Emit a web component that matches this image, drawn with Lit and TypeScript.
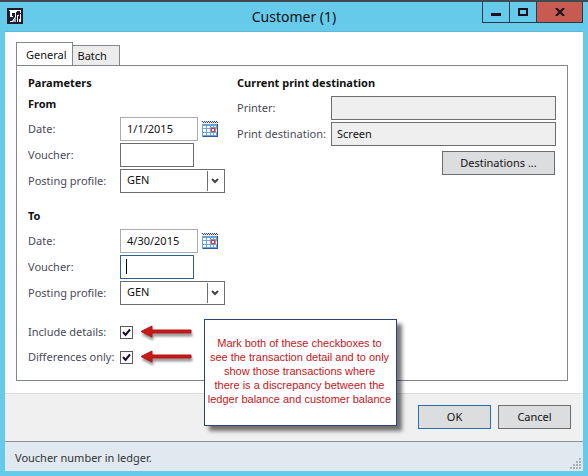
import { LitElement, html, css, svg } from "lit";
import { customElement } from "lit/decorators.js";

const calendar = html`<svg width="16" height="16" viewBox="0 0 16 16" aria-hidden="true">
  <path d="M0 2h16v14H0z" fill="#6fa3d4" />
  <path d="M15 3h1v13H1v-1h14z" fill="#2f5b92" />
  <path d="M0 0h16v3H0z" fill="#e8ecf2" />
  <path d="M0 0.500h16M1 1.500h15" stroke="#39414e" stroke-dasharray="1 1" />
  <path
    d="M1 5h3v2H1zM5 5h3v2H5zM9 5h2v1H9zM12 5h2v1h-2zM1 8h3v3H1zM5 8h3v3H5zM14 8h1v3h-1zM1 12h3v2H1zM5 12h3v2H5zM9 12h2v2H9zM12 12h2v2h-2z"
    fill="#fff"
  />
  <path d="M9.500 7.500h3v3h-3z" fill="#fff" stroke="#e0262c" />
</svg>`;

const arrow = html`<svg class="arrow" width="56" height="18" viewBox="0 0 56 18" aria-hidden="true">
  <path d="M2 8.500L13 3v4h39v3H13v4z" fill="#c81818" stroke="#b01414" stroke-linejoin="round" />
</svg>`;

const gripDots = [[9, 0], [6, 3], [9, 3], [3, 6], [6, 6], [9, 6], [0, 9], [3, 9], [6, 9], [9, 9]];

@customElement("app-root")
export class AppRoot extends LitElement {
  static styles = css`
    :host {
      display: block;
      font: 11px/16px "Noto Sans", "Open Sans", sans-serif;
      color: #111;
    }
    * {
      box-sizing: border-box;
    }
    .window {
      display: flex;
      flex-direction: column;
      min-height: 100vh;
      padding: 0 5px 5px;
      border-top: 2px solid #3d4a50;
      background: #66caea;
    }
    .titlebar {
      display: grid;
      grid-template-columns: 104px 1fr 104px;
      align-items: start;
      height: 30px;
      border-bottom: 1px solid #62b6d8;
    }
    .app-icon {
      margin: 6px 0 0 2px;
    }
    h1 {
      margin: 5px 0 0;
      font-size: 14px;
      line-height: 20px;
      font-weight: 400;
      text-align: center;
    }
    .controls {
      display: flex;
      justify-content: flex-end;
      height: 21px;
    }
    .controls button {
      display: grid;
      place-items: center;
      width: 28px;
      margin-left: -1px;
      padding: 0;
      border: 1px solid #2b3a48;
      border-top: 0;
      background: none;
    }
    .controls .close {
      width: 47px;
      background: #c75b50;
    }
    .body {
      flex: 1;
      padding: 10px 15px 12px 11px;
      background: #fff;
    }
    .tabs {
      position: relative;
      display: flex;
      align-items: flex-end;
      margin-bottom: -1px;
    }
    .tabs button {
      height: 21px;
      padding: 0 12px 0 5px;
      border: 1px solid #82868f;
      border-left: 0;
      background: #ececec;
      font: inherit;
      color: inherit;
    }
    .tabs .selected {
      height: 24px;
      padding: 0 5px 0 9px;
      border-left: 1px solid #82868f;
      border-bottom: 0;
      background: #fff;
    }
    .panel {
      position: relative;
      display: grid;
      grid-template-columns: 209px 1fr;
      padding: 8px 11px 11px;
      border: 1px solid #82868f;
    }
    h2,
    h3 {
      margin: 0;
      font-size: 11px;
      line-height: 18px;
      font-weight: 700;
    }
    h3 {
      margin: 3px 0 4px;
    }
    .second {
      margin-top: 14px;
    }
    .rows {
      display: grid;
      grid-template-columns: 92px 1fr;
      row-gap: 2px;
      align-items: center;
      color: #4a4a58;
    }
    .print {
      grid-template-columns: 94px 1fr;
      margin-top: 4px;
    }
    .cell {
      position: relative;
      display: flex;
      align-items: center;
      gap: 4px;
      height: 24px;
    }
    label {
      white-space: nowrap;
    }
    input[type="text"],
    select {
      width: 74px;
      height: 24px;
      padding: 0 6px 2px;
      border: 1px solid #6d6d6d;
      border-radius: 0;
      outline: 0;
      background: #fff;
      font: inherit;
      color: #111;
    }
    input.date {
      width: 78px;
      border-color: #ababab;
    }
    input.active {
      border-color: #2a5f9e;
    }
    .print input[type="text"] {
      width: 100%;
      padding: 0 5px 2px;
      background: #efefef;
    }
    select {
      width: 105px;
      appearance: none;
    }
    .icon-button {
      display: block;
      width: 16px;
      height: 16px;
      padding: 0;
      border: 0;
      background: none;
    }
    .chevron {
      position: absolute;
      left: 87px;
      top: 2px;
      pointer-events: none;
    }
    .caret {
      position: absolute;
      left: 6px;
      top: 4px;
      width: 1px;
      height: 15px;
      background: #000;
    }
    .checks {
      row-gap: 1px;
      margin-top: 15px;
    }
    .checks .cell {
      gap: 6px;
    }
    input[type="checkbox"] {
      appearance: none;
      flex: none;
      width: 13px;
      height: 13px;
      margin: 0;
      border: 1px solid #5a5a5a;
      background: #fff;
    }
    .tick {
      position: absolute;
      left: 0;
      pointer-events: none;
    }
    .arrow {
      flex: none;
      filter: drop-shadow(1px 3px 1px #0006);
    }
    .push {
      width: 73px;
      height: 24px;
      padding: 0 0 1px;
      border: 1px solid #6d6d6d;
      background: #dcdddf;
      font: inherit;
      color: #111;
    }
    .wide {
      display: block;
      width: 113px;
      margin: 5px 1px 0 auto;
    }
    .default {
      border-color: #2a70b8;
    }
    .callout {
      position: absolute;
      left: 187px;
      top: 253px;
      width: 193px;
      margin: 0;
      padding: 16px 2px 19px 0;
      border: 1px solid #2b4578;
      background: #fff;
      box-shadow: 5px 5px 4px #0008;
      font: 11px/14px "Liberation Sans", Arial, sans-serif;
      color: #c81420;
      text-align: center;
      white-space: pre-line;
    }
    .footer {
      display: flex;
      justify-content: flex-end;
      gap: 7px;
      padding: 11px 12px 12px;
      border-top: 1px solid #dcdcdc;
      background: #f0f0f0;
    }
    .status {
      display: flex;
      justify-content: space-between;
      align-items: flex-end;
      padding: 8px 2px 2px 10px;
      border-top: 1px solid #8c9298;
      background: #e1e9f0;
      color: #333;
    }
    .status output {
      padding-bottom: 3px;
    }
  `;

  private period(id: string, date: string, active: boolean) {
    return html`<div class="rows">
      <label for="${id}-date">Date:</label>
      <div class="cell">
        <input id="${id}-date" class="date" type="text" .value=${date} />
        <button class="icon-button" aria-label="Choose date">${calendar}</button>
      </div>
      <label for="${id}-voucher">Voucher:</label>
      <div class="cell">
        <input id="${id}-voucher" class=${active ? "active" : ""} type="text" />
        ${active ? html`<span class="caret"></span>` : ""}
      </div>
      <label for="${id}-profile">Posting profile:</label>
      <div class="cell">
        <select id="${id}-profile"><option>GEN</option></select>
        <svg class="chevron" width="16" height="20" aria-hidden="true">
          <path d="M0.500 0v20" stroke="#6d6d6d" />
          <path d="M5 8l3 3 3-3" fill="none" stroke="#444" stroke-width="2" />
        </svg>
      </div>
    </div>`;
  }

  private check(id: string, label: string) {
    return html`<label for=${id}>${label}</label>
      <div class="cell">
        <input id=${id} type="checkbox" checked />
        <svg class="tick" width="13" height="13" aria-hidden="true">
          <path d="M3 6l2.500 3L10 3.500" fill="none" stroke="#1a1020" stroke-width="2" />
        </svg>
        ${arrow}
      </div>`;
  }

  render() {
    return html`<div class="window">
      <header class="titlebar">
        <svg class="app-icon" width="16" height="16" viewBox="0 0 16 16" aria-hidden="true">
          <rect width="16" height="16" fill="#241a30" />
          <path d="M2 2h12v3h-1V3H3v6h3V8H5V5h3v4l-3 4H3v1h3l3-5V4h1v10h1V8h1v6h2V6h-1v5h-1V7h-2V3H2z" fill="#fff" />
          <path d="M7 12l2-3v5H6z" fill="#8fb4d8" />
        </svg>
        <h1>Customer (1)</h1>
        <div class="controls">
          <button aria-label="Minimize">
            <svg width="10" height="9"><path d="M0 6.500h10" stroke="#1a1020" stroke-width="3" /></svg>
          </button>
          <button aria-label="Maximize">
            <svg width="10" height="8"><rect x="1" y="1" width="8" height="6" fill="none" stroke="#1a1020" stroke-width="2" /></svg>
          </button>
          <button class="close" aria-label="Close">
            <svg width="10" height="8"><path d="M1 0l8 8M9 0L1 8" stroke="#1a1020" stroke-width="2" /></svg>
          </button>
        </div>
      </header>
      <main class="body">
        <div class="tabs" role="tablist">
          <button class="selected" role="tab" aria-selected="true">General</button>
          <button role="tab" aria-selected="false">Batch</button>
        </div>
        <div class="panel" role="tabpanel">
          <section>
            <h2>Parameters</h2>
            <h3>From</h3>
            ${this.period("from", "1/1/2015", false)}
            <h3 class="second">To</h3>
            ${this.period("to", "4/30/2015", true)}
            <div class="rows checks">
              ${this.check("details", "Include details:")} ${this.check("differences", "Differences only:")}
            </div>
          </section>
          <section>
            <h2>Current print destination</h2>
            <div class="rows print">
              <label for="printer">Printer:</label>
              <input id="printer" type="text" readonly />
              <label for="destination">Print destination:</label>
              <input id="destination" type="text" readonly .value=${"Screen"} />
            </div>
            <button class="push wide">Destinations ...</button>
          </section>
          <p class="callout">${["Mark both of these checkboxes to", "see the transaction detail and to only", "show those transactions where", "there is a discrepancy between the", "ledger balance and customer balance"].join("\n")}</p>
        </div>
      </main>
      <footer class="footer">
        <button class="push default">OK</button>
        <button class="push">Cancel</button>
      </footer>
      <div class="status">
        <output>Voucher number in ledger.</output>
        <svg width="11" height="11" aria-hidden="true">
          ${gripDots.map(([x, y]) => svg`<rect x=${x} y=${y} width="2" height="2" fill="#a9afb6" />`)}
        </svg>
      </div>
    </div>`;
  }
}
